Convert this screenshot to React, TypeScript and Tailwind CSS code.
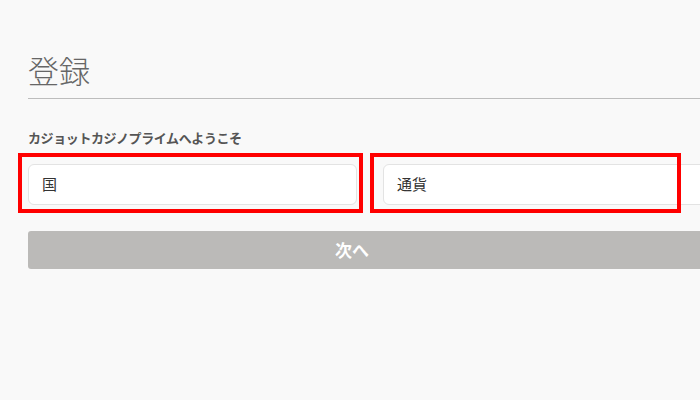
export default function App() {
  return (
    <div className="relative w-[700px] h-[400px] overflow-hidden bg-[#f9f9f9] font-['Noto_Sans_CJK_JP',sans-serif]">
      <div className="w-[684px] ml-[28px] pt-[50px]">
        {/* 見出し */}
        <h1 className="text-[31px] leading-[40px] font-light text-[#666]">登録</h1>
        <div className="h-px bg-[#bdbdbd] mt-[8px]"></div>

        <p className="mt-[30px] text-[13px] leading-[18px] font-bold text-[#555] tracking-[-0.4px]">
          カジョットカジノプライムへようこそ
        </p>

        {/* 入力欄 */}
        <div className="flex gap-[26px] mt-[17px]">
          <div className="flex-1 h-[41px] bg-white border border-[#e3e3e3] rounded-[6px] flex items-center px-[13px] text-[15px] text-[#333]">
            国
          </div>
          <div className="flex-1 h-[41px] bg-white border border-[#e3e3e3] rounded-[6px] flex items-center px-[13px] text-[15px] text-[#333]">
            通貨
          </div>
        </div>

        <button className="w-full h-[38px] mt-[26px] bg-[#bbbab8] rounded-[3px] pr-[36px] text-white text-[17px] font-bold">
          次へ
        </button>
      </div>

      {/* 赤枠 (注釈) */}
      <div className="absolute left-[18px] top-[153px] w-[345px] h-[60px] border-[4px] border-[#ff0000]"></div>
      <div className="absolute left-[370px] top-[153px] w-[311px] h-[60px] border-[4px] border-[#ff0000]"></div>
    </div>
  );
}
